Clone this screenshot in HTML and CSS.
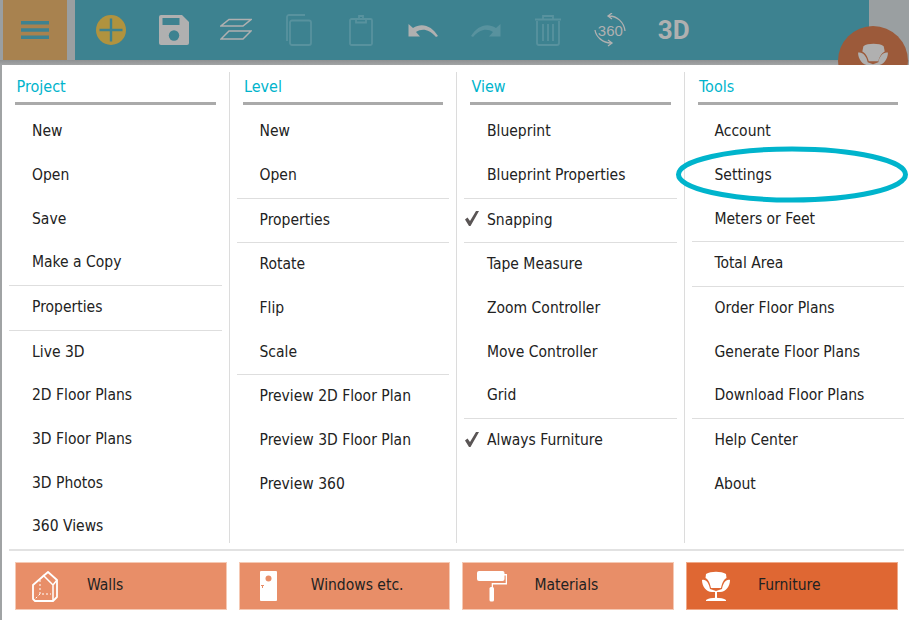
FILE: index.html
```html
<!DOCTYPE html>
<html lang="en">
<head>
<meta charset="utf-8">
<title>Floor plan menu</title>
<link rel="stylesheet" href="styles.css">
</head>
<body>
<div class="page">
  <header class="topbar">
    <button class="menu-btn" aria-label="Menu">
      <svg width="28" height="18" viewBox="0 0 28 18"><path d="M0 0h28v3.500H0zM0 7.200h28v3.500H0zM0 14.500h28V18H0z" fill="#3d8290"/></svg>
    </button>
    <div class="toolbar">
      <span class="tool"><svg width="32" height="32" viewBox="0 0 32 32"><circle cx="16" cy="16" r="15" fill="#b0933f"/><path d="M14.800 4.500h2.400v10.300h10.300v2.400H17.200v10.300h-2.400V17.200H4.500v-2.400h10.300z" fill="#3d8290"/></svg></span>
      <span class="tool"><svg width="32" height="32" viewBox="0 0 32 32"><path d="M3 1h21l7 7v21a2 2 0 0 1-2 2H3a2 2 0 0 1-2-2V3a2 2 0 0 1 2-2z" fill="#b0b0b0"/><rect x="4.500" y="4" width="17" height="7" fill="#3d8290"/><circle cx="16" cy="21.500" r="5.200" fill="#3d8290"/></svg></span>
      <span class="tool"><svg width="32" height="32" viewBox="0 0 32 32" fill="none" stroke="#b0b0b0" stroke-width="1.500"><path d="M9 5.500h22L23 12H1zM9 17h22l-8 8H1z"/></svg></span>
      <span class="tool"><svg width="32" height="32" viewBox="0 0 32 32" fill="none" stroke="#58929e" stroke-width="1.800"><path d="M5 27V3a2 2 0 0 1 2-2h16"/><rect x="8" y="6.500" width="21" height="24.500" rx="2"/></svg></span>
      <span class="tool"><svg width="32" height="32" viewBox="0 0 32 32" fill="none" stroke="#58929e" stroke-width="1.800"><rect x="5" y="5" width="22" height="26" rx="1.500"/><path d="M11 5V8.500h10V5h-3V2h-4v3z"/></svg></span>
      <span class="tool"><svg width="32" height="32" viewBox="0 0 32 32"><path d="M1.500 10V22.500H13L9 18C15 14 22 15 29 23L31 22C25 12 15 8 6 14Z" fill="#b0b0b0"/></svg></span>
      <span class="tool"><svg width="32" height="32" viewBox="0 0 32 32"><path d="M30.500 10V22.500H19L23 18C17 14 10 15 3 23L1 22C7 12 17 8 26 14Z" fill="#58929e"/></svg></span>
      <span class="tool"><svg width="32" height="32" viewBox="0 0 32 32" fill="none" stroke="#58929e" stroke-width="1.800"><path d="M5 7v22a2 2 0 0 0 2 2h18a2 2 0 0 0 2-2V7M3 5.500h26M11 5V2h10v3M11 10v17M16 10v17M21 10v17"/></svg></span>
      <span class="tool tool-360"><svg width="32" height="34" viewBox="0 0 32 34" fill="none" stroke="#b0b0b0" stroke-width="1.300"><path d="M15 3C23 3 30 9 31 18M18 0L14 3L18 6M1 17C2 24 9 30 17 30M14 27L18 30L14 33"/></svg><span class="label-360">360</span></span>
      <span class="tool tool-3d">3D</span>
    </div>
    <div class="fab">
      <svg width="32" height="32" viewBox="0 0 28 30" fill="#b0b0b0"><path d="M5 3C9 0 20 0 24 3L25 8C21 10 20 14 19 17H10C9 14 8 10 4 8Z"/><path d="M0 9C4 8 8 12 9 18L14 20L19 18C20 12 24 8 28 9C28 15 24 21 18 21H10C4 21 0 15 0 9Z"/></svg>
    </div>
  </header>

  <main class="panel">
    <div class="columns">
      <section class="col">
        <h2 class="col-title">Project</h2>
        <ul class="items">
          <li>New</li><li>Open</li><li>Save</li><li>Make a Copy</li>
          <li class="sep"></li>
          <li>Properties</li>
          <li class="sep"></li>
          <li>Live 3D</li><li>2D Floor Plans</li><li>3D Floor Plans</li><li>3D Photos</li><li>360 Views</li>
        </ul>
      </section>
      <section class="col">
        <h2 class="col-title">Level</h2>
        <ul class="items">
          <li>New</li><li>Open</li>
          <li class="sep"></li>
          <li>Properties</li>
          <li class="sep"></li>
          <li>Rotate</li><li>Flip</li><li>Scale</li>
          <li class="sep"></li>
          <li>Preview 2D Floor Plan</li><li>Preview 3D Floor Plan</li><li>Preview 360</li>
        </ul>
      </section>
      <section class="col">
        <h2 class="col-title">View</h2>
        <ul class="items">
          <li>Blueprint</li><li>Blueprint Properties</li>
          <li class="sep"></li>
          <li><svg class="check" width="14" height="15" viewBox="0 0 14 15"><path d="M0 8.500l2.500-2 2.500 3.500L11 0h3L5.500 15h-1.500z" fill="#5a5555"/></svg>Snapping</li>
          <li class="sep"></li>
          <li>Tape Measure</li><li>Zoom Controller</li><li>Move Controller</li><li>Grid</li>
          <li class="sep"></li>
          <li><svg class="check" width="14" height="15" viewBox="0 0 14 15"><path d="M0 8.500l2.500-2 2.500 3.500L11 0h3L5.500 15h-1.500z" fill="#5a5555"/></svg>Always Furniture</li>
        </ul>
      </section>
      <section class="col">
        <h2 class="col-title">Tools</h2>
        <ul class="items">
          <li>Account</li><li>Settings</li><li>Meters or Feet</li>
          <li class="sep"></li>
          <li>Total Area</li>
          <li class="sep"></li>
          <li>Order Floor Plans</li><li>Generate Floor Plans</li><li>Download Floor Plans</li>
          <li class="sep"></li>
          <li>Help Center</li><li>About</li>
        </ul>
      </section>
    </div>
    <hr class="rule">
    <nav class="tabs">
      <a class="tab">
        <span class="tab-icon"><svg width="26" height="31" viewBox="0 0 26 31"><path d="M1 28V14L16 1L25 9V26L21 30H3Z" fill="none" stroke="#fff" stroke-width="1.800" stroke-linejoin="round"/><path d="M11 4L21 14V30M21 14L25 9" fill="none" stroke="#fff" stroke-width="1.500"/><path d="M8 9V23H19M8 23L3 28" fill="none" stroke="#fff" stroke-width="1" stroke-dasharray="2 2"/></svg></span>
        <span>Walls</span>
      </a>
      <a class="tab">
        <span class="tab-icon"><svg width="17" height="30" viewBox="0 0 17 30"><rect width="17" height="30" rx="1" fill="#fff"/><circle cx="8.500" cy="7.500" r="3" fill="#e88e68"/><path d="M1 14h3v1H3v2H2v-2H1z" fill="#e88e68"/></svg></span>
        <span>Windows etc.</span>
      </a>
      <a class="tab">
        <span class="tab-icon"><svg width="30" height="31" viewBox="0 0 30 31" fill="#fff"><rect width="27.500" height="10" rx="2"/><path d="M27 3h3v10.500H16V18h-1.300V12H28.700V4.500H27z"/><rect x="12.500" y="16" width="4.500" height="14.500" rx="1.500"/></svg></span>
        <span>Materials</span>
      </a>
      <a class="tab tab-active">
        <span class="tab-icon"><svg width="28" height="30" viewBox="0 0 28 30" fill="#fff"><path d="M4 3C9 0 19 0 24 3L24.500 7C21 9 20 13 19 17H9C8 13 7 9 3.500 7Z"/><path d="M0 9C4 8 7 12 8 18L14 20L20 18C21 12 24 8 28 9C28 15 24 21 18 21H10C4 21 0 15 0 9Z"/><rect x="13" y="21" width="2" height="6"/><path d="M4 29C8 26 20 26 24 29V30H4Z"/></svg></span>
        <span>Furniture</span>
      </a>
    </nav>
    <svg class="highlight" width="240" height="64" viewBox="0 0 240 64"><ellipse cx="118" cy="32.500" rx="113.500" ry="25.500" fill="none" stroke="#00b4cc" stroke-width="5"/></svg>
  </main>
</div>
</body>
</html>
```
FILE: styles.css
```css
* { box-sizing: border-box; }
html, body { margin: 0; height: 100%; }
body {
  width: 909px;
  height: 620px;
  overflow: hidden;
  background: #a0a3a4;
  font-family: "DejaVu Sans", sans-serif;
  font-stretch: condensed;
  color: #222;
}
.page {
  display: flex;
  flex-direction: column;
  height: 620px;
  overflow: hidden;
}
.topbar {
  position: relative;
  display: flex;
  height: 65px;
  padding-left: 3px;
  padding-bottom: 5px;
  background: linear-gradient(#9a9fa1 60px, #8f9192 60px, #a2a4a5 65px);
}
.menu-btn {
  width: 64px;
  height: 60px;
  margin-right: 8px;
  padding: 0;
  border: 0;
  background: #a8824f;
  display: flex;
  align-items: center;
  justify-content: center;
}
.toolbar {
  display: flex;
  align-items: center;
  width: 794px;
  height: 60px;
  padding-left: 5px;
  background: #3d8290;
}
.tool {
  width: 62.4px;
  height: 60px;
  flex: none;
  display: flex;
  align-items: center;
  justify-content: center;
}
.tool-360 { position: relative; }
.label-360 {
  position: absolute;
  inset: 0;
  display: flex;
  align-items: center;
  justify-content: center;
  font: 15px "Liberation Sans", sans-serif;
  color: #b0b0b0;
}
.tool-3d {
  padding-left: 2px;
  font: bold 26px "Roboto", sans-serif;
  color: #b0b0b0;
}
.fab {
  position: absolute;
  left: 838px;
  top: 26px;
  width: 70px;
  height: 70px;
  border-radius: 50%;
  background: #9c5a3a;
  display: flex;
  justify-content: center;
  padding-top: 17px;
}
.panel {
  position: relative;
  z-index: 1;
  flex: 1;
  margin-left: 2px;
  background: #fff;
  padding-top: 7px;
}
.columns {
  display: grid;
  grid-template-columns: repeat(4, 227.5px);
  grid-template-rows: 471px;
}
.col {
  padding: 0 7px;
  border-right: 1px solid #dcdcdc;
}
.col-title {
  margin: 0 6px 4px;
  padding: 4px 0 0 1.5px;
  height: 33px;
  border-bottom: 3px solid #aaa;
  font-size: 16px;
  line-height: 21px;
  font-weight: 400;
  color: #00b4cc;
}
.items {
  list-style: none;
  margin: 0;
  padding: 0;
}
.items li {
  position: relative;
  height: 43.67px;
  padding: 1px 0 0 23px;
  display: flex;
  align-items: center;
  font-size: 15.5px;
  white-space: nowrap;
}
.items li.sep {
  height: 1px;
  margin: 1.5px 0 -1.5px;
  padding: 0;
  background: #dedede;
}
.check {
  position: absolute;
  left: 1px;
  top: 14px;
}
.rule {
  margin: 6px 5px 0 7px;
  border: 0;
  height: 2px;
  background: #e2e2e2;
}
.tabs {
  display: grid;
  grid-template-columns: repeat(4, 211.7px);
  gap: 12px;
  margin: 11px 0 0 13px;
}
.tab {
  height: 48px;
  display: flex;
  align-items: center;
  padding-bottom: 2px;
  background: #e88e68;
  border: 1px solid #f5c9b4;
  font-size: 15.5px;
  color: #222;
}
.tab-icon {
  width: 57px;
  margin-right: 14px;
  margin-top: 2px;
  display: flex;
  justify-content: center;
}
.tab-active {
  background: #df6733;
  border-color: #f0a988;
}
.highlight {
  position: absolute;
  left: 672px;
  top: 77px;
}
```
